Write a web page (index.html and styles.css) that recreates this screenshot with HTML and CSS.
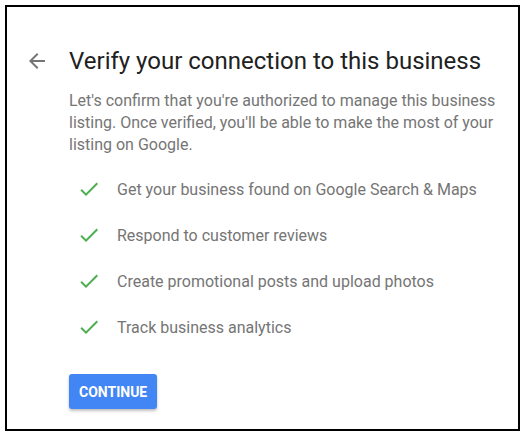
FILE: index.html
```html
<!DOCTYPE html>
<html>
<head>
<meta charset="utf-8">
<link rel="stylesheet" href="styles.css">
</head>
<body>
<div class="frame">
  <div class="header">
    <svg class="back" width="24" height="24" viewBox="0 0 24 24"><path d="M20 11H7.83l5.59-5.59L12 4l-8 8 8 8 1.41-1.41L7.83 13H20v-2z" fill="#757575"/></svg>
    <h1 class="title">Verify your connection to this business</h1>
  </div>
  <div class="content">
    <p class="intro">Let's confirm that you're authorized to manage this business listing. Once verified, you'll be able to make the most of your listing on Google.</p>
    <ul class="checks">
      <li><svg class="check" width="24" height="24" viewBox="0 0 24 24"><path d="M9 16.17L4.83 12l-1.42 1.41L9 19 21 7l-1.41-1.41z" fill="#4caf50"/></svg><span>Get your business found on Google Search &amp; Maps</span></li>
      <li><svg class="check" width="24" height="24" viewBox="0 0 24 24"><path d="M9 16.17L4.83 12l-1.42 1.41L9 19 21 7l-1.41-1.41z" fill="#4caf50"/></svg><span>Respond to customer reviews</span></li>
      <li><svg class="check" width="24" height="24" viewBox="0 0 24 24"><path d="M9 16.17L4.83 12l-1.42 1.41L9 19 21 7l-1.41-1.41z" fill="#4caf50"/></svg><span>Create promotional posts and upload photos</span></li>
      <li><svg class="check" width="24" height="24" viewBox="0 0 24 24"><path d="M9 16.17L4.83 12l-1.42 1.41L9 19 21 7l-1.41-1.41z" fill="#4caf50"/></svg><span>Track business analytics</span></li>
    </ul>
    <button class="btn">CONTINUE</button>
  </div>
</div>
</body>
</html>
```
FILE: styles.css
```css
* { box-sizing: border-box; }
html, body { margin: 0; padding: 0; background: #fff; }
body { padding: 5px; font-family: Roboto, "Noto Sans", Arial, sans-serif; }
.frame {
  width: 515px;
  height: 426px;
  border: 2px solid #000;
  padding: 39px 0 0 0;
}
.header {
  display: flex;
  align-items: center;
  padding-left: 18px;
}
.back { flex: none; margin-right: 20px; }
.title {
  margin: 0;
  font-size: 24px;
  font-weight: 400;
  color: #212121;
  line-height: 30px;
}
.content { padding-left: 62px; padding-right: 20px; }
.intro {
  margin: 14px 0 0 0;
  font-size: 16px;
  line-height: 22px;
  color: #757575;
}
.checks {
  list-style: none;
  margin: 10px 0 0 0;
  padding: 0;
}
.checks li {
  display: flex;
  align-items: center;
  height: 46px;
  font-size: 16px;
  color: #757575;
}
.check { flex: none; margin-left: 8px; margin-right: 16px; }
.btn {
  margin-top: 24px;
  background: #4285f4;
  color: #fff;
  border: none;
  border-radius: 3px;
  font-family: Roboto, Arial, sans-serif;
  font-weight: 700;
  font-size: 14px;
  height: 35px;
  padding: 0 10px;
  box-shadow: 0 2px 3px rgba(0,0,0,0.25);
}
```
